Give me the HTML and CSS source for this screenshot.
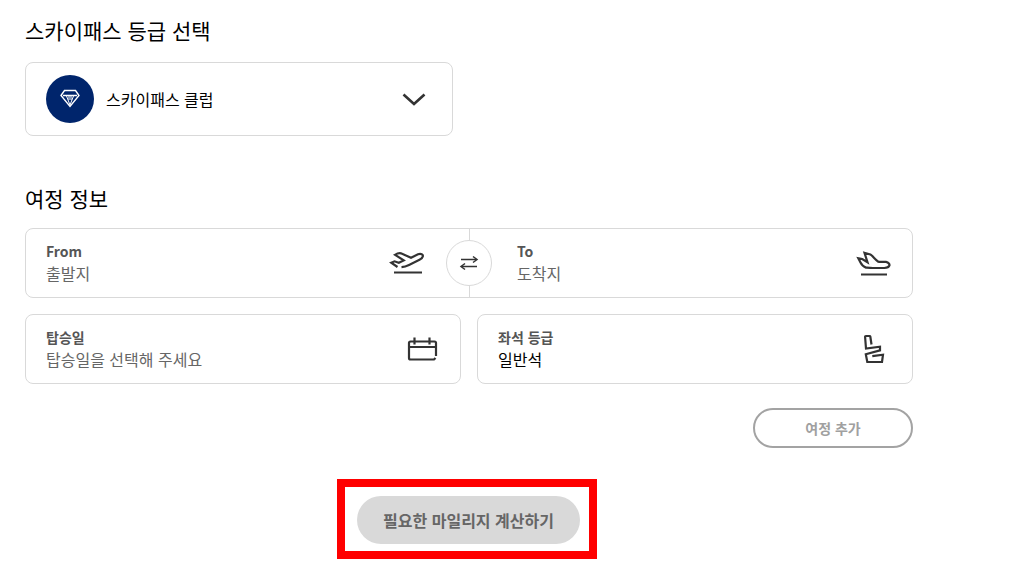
FILE: index.html
```html
<!DOCTYPE html>
<html lang="ko">
<head>
<meta charset="utf-8">
<meta name="viewport" content="width=device-width, initial-scale=1">
<title>마일리지 계산</title>
<link rel="stylesheet" href="styles.css">
</head>
<body>
<main class="page">
  <section class="tier-section">
    <h2 class="heading" id="tier-title">스카이패스 등급 선택</h2>
    <div class="box tier">
      <span class="tier-badge">
        <svg class="gem" viewBox="0 0 24 24" aria-hidden="true"><path d="M3 8.500 6.500 3.500h11L21 8.500 12 19.500ZM5 8.500h14"/><path class="facet" d="M8.500 9l3.500 9 3.500-9M11 9v4M13 9v4"/></svg>
      </span>
      <select class="control" aria-labelledby="tier-title"><option>스카이패스 클럽</option></select>
      <svg class="icon chevron" viewBox="0 0 36 36" aria-hidden="true"><path d="M7.500 13.500l10.500 9.500 10.500-9.500"/></svg>
    </div>
  </section>

  <section class="trip-section">
    <h2 class="heading">여정 정보</h2>
    <div class="fields">
      <div class="box route">
        <div class="field origin">
          <div class="field-text">
            <label class="label" for="from">From</label>
            <input class="control" id="from" type="text" placeholder="출발지">
          </div>
          <svg class="icon" viewBox="0 0 36 36" aria-hidden="true"><path d="M8.500 22 2.200 17.700 5.500 16.300l4.300 1.400 4.900-2.300L6 9.800C8 8.500 10 8 12 8.300l10 4.500L29 9.300c3-1.200 5.300.2 4.800 2.200-.3 1.400-1.300 2.300-3.300 3.300L20 20c-3 1.500-5 2-7.500 2.200M5 27.500h28"/></svg>
        </div>
        <button class="swap" type="button" aria-label="출발지와 도착지 바꾸기">
          <svg class="swap-icon" viewBox="0 0 24 24" aria-hidden="true"><path class="line" d="M4 8.500h15M5 15.500h15"/><path class="tip" d="M16 5.500l4 3-4 3M8 12.500l-4 3 4 3"/></svg>
        </button>
        <div class="field destination">
          <div class="field-text">
            <label class="label" for="to">To</label>
            <input class="control" id="to" type="text" placeholder="도착지">
          </div>
          <svg class="icon" viewBox="0 0 36 36" aria-hidden="true"><path d="M10 22.600C6.500 21.500 5.500 19.500 4.500 17.500L2.300 13.300 6.200 14l5.300 3.200L8.500 7.900l5.800 1.500c3 2 5 5.500 8 7.300 2 .7 5-.2 7.700.2 2.500.5 4 2.300 3.300 3.800-.5 1.600-2.200 2.200-5 2.300H17c-3.500 0-5-.2-7.500-.4M5 29.500h26"/></svg>
        </div>
      </div>

      <div class="box field">
        <div class="field-text">
          <label class="label" for="date">탑승일</label>
          <input class="control" id="date" type="text" placeholder="탑승일을 선택해 주세요">
        </div>
        <svg class="icon" viewBox="0 0 36 36" aria-hidden="true"><path d="M32 25V12q0-1.500-1.500-1.500h-24Q5 10.500 5 12v15q0 1.500 1.500 1.500H30l1.500-1.500M5 16h27M10.500 6.500v7M25.500 6.500v7"/></svg>
      </div>

      <div class="box field">
        <div class="field-text">
          <label class="label" for="seat">좌석 등급</label>
          <select class="control" id="seat"><option>일반석</option></select>
        </div>
        <svg class="icon" viewBox="0 0 36 36" aria-hidden="true"><path d="M15.500 13.500 14.300 5.500Q14.200 5 13.500 5H10q-1 0-.9 1l.9 11.500 14-1.800V19.300L9.800 23.300l1.500 7.700H26l1-7.300-10.700 1.500"/></svg>
      </div>
    </div>

    <div class="extra">
      <button class="pill add" type="button">여정 추가</button>
    </div>
  </section>

  <div class="submit-row">
    <div class="highlight">
      <button class="pill submit" type="button">필요한 마일리지 계산하기</button>
    </div>
  </div>
</main>
</body>
</html>
```
FILE: styles.css
```css
* {
  box-sizing: border-box;
}

body {
  margin: 0;
  background: #fff;
  color: #000;
  font-family: "Noto Sans CJK KR", sans-serif;
  font-size: 16px;
}

button,
input,
select {
  font: inherit;
  color: inherit;
}

.page {
  padding: 14px 99px 3px 25px;
}

.trip-section {
  margin-top: 46px;
}

.heading {
  margin: 0 0 14px;
  font-size: 21px;
  font-weight: 400;
  line-height: 32px;
}

.tier-section .heading {
  margin-bottom: 16px;
}

.box {
  border: 1px solid #d9d9d9;
  border-radius: 8px;
  background: #fff;
}

.tier {
  display: flex;
  align-items: center;
  gap: 12px;
  width: 100%;
  max-width: 428px;
  padding: 12px 20px;
}

.tier-badge {
  display: grid;
  place-items: center;
  width: 48px;
  height: 48px;
  border-radius: 50%;
  background: #00256c;
}

.gem {
  width: 24px;
  height: 24px;
  fill: none;
  stroke: #fff;
  stroke-width: 1.4;
}

.facet {
  stroke-width: 1;
}

.control {
  display: block;
  flex: 1;
  width: 100%;
  min-width: 0;
  height: 22px;
  margin: 0;
  padding: 0;
  border: 0;
  appearance: none;
  background: transparent;
  line-height: 22px;
}

.control::placeholder {
  color: #666;
  opacity: 1;
}

.icon {
  flex: none;
  width: 36px;
  height: 36px;
  fill: none;
  stroke: #333;
  stroke-width: 2.2;
}

.chevron {
  stroke-width: 2.6;
  pointer-events: none;
}

.fields {
  display: grid;
  grid-template-columns: 1fr 1fr;
  gap: 16px;
}

.field {
  display: flex;
  align-items: center;
  padding: 11px 20px;
}

.field-text {
  flex: 1;
  min-width: 0;
  padding-bottom: 2px;
}

.label {
  display: block;
  color: #555;
  font-size: 14px;
  font-weight: 700;
  line-height: 22px;
}

.route {
  position: relative;
  display: grid;
  grid-template-columns: 1fr 1fr;
  grid-column: 1 / -1;
}

.origin {
  padding-right: 44px;
}

.destination {
  padding-left: 47px;
  border-left: 1px solid #d9d9d9;
}

.swap {
  position: absolute;
  inset: 0;
  display: grid;
  place-items: center;
  width: 46px;
  height: 46px;
  margin: auto;
  padding: 0;
  border: 1px solid #d9d9d9;
  border-radius: 50%;
  background: #fff;
}

.swap-icon {
  width: 24px;
  height: 24px;
  fill: none;
  stroke: #333;
}

.line {
  stroke-width: 1.5;
}

.tip {
  stroke-width: 1.5;
}

.extra {
  display: flex;
  justify-content: flex-end;
  margin-top: 24px;
}

.pill {
  border-radius: 24px;
  font-weight: 700;
}

.add {
  width: 160px;
  height: 40px;
  border: 2px solid #a3a3a3;
  background: #fff;
  color: #a0a0a0;
  font-size: 14px;
}

.submit-row {
  display: flex;
  justify-content: center;
  margin-top: 31px;
  padding-right: 4px;
}

.highlight {
  padding: 9px 9px 7px 12px;
  border: 8px solid #f00;
}

.submit {
  display: block;
  height: 48px;
  padding: 0 26px;
  border: 0;
  background: #d9d9d9;
  color: #666;
}
```
